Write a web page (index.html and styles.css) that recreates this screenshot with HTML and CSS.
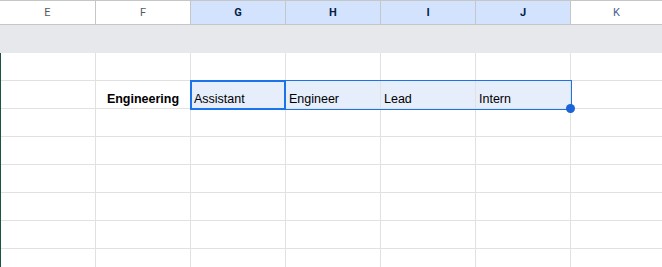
FILE: index.html
```html
<!DOCTYPE html>
<html lang="en">
<head>
    <meta charset="UTF-8">
    <meta name="viewport" content="width=device-width, initial-scale=1.0">
    <title>Sheet</title>
    <link rel="stylesheet" href="styles.css">
</head>
<body>

    <div class="sheet">
        <div class="col-heads">
            <div class="col-head">E</div>
            <div class="col-head">F</div>
            <div class="col-head active">G</div>
            <div class="col-head active">H</div>
            <div class="col-head active">I</div>
            <div class="col-head active">J</div>
            <div class="col-head">K</div>
        </div>

        <div class="frozen-band"></div>

        <div class="grid">
            <div class="row">
                <div class="cell"></div><div class="cell"></div><div class="cell"></div><div class="cell"></div>
                <div class="cell"></div><div class="cell"></div><div class="cell"></div>
            </div>
            <div class="row">
                <div class="cell"></div>
                <div class="cell bold center">Engineering</div>
                <div class="cell sel">Assistant</div>
                <div class="cell sel">Engineer</div>
                <div class="cell sel">Lead</div>
                <div class="cell sel">Intern</div>
                <div class="cell"></div>
            </div>
            <div class="row">
                <div class="cell"></div><div class="cell"></div><div class="cell"></div><div class="cell"></div>
                <div class="cell"></div><div class="cell"></div><div class="cell"></div>
            </div>
            <div class="row">
                <div class="cell"></div><div class="cell"></div><div class="cell"></div><div class="cell"></div>
                <div class="cell"></div><div class="cell"></div><div class="cell"></div>
            </div>
            <div class="row">
                <div class="cell"></div><div class="cell"></div><div class="cell"></div><div class="cell"></div>
                <div class="cell"></div><div class="cell"></div><div class="cell"></div>
            </div>
            <div class="row">
                <div class="cell"></div><div class="cell"></div><div class="cell"></div><div class="cell"></div>
                <div class="cell"></div><div class="cell"></div><div class="cell"></div>
            </div>
            <div class="row">
                <div class="cell"></div><div class="cell"></div><div class="cell"></div><div class="cell"></div>
                <div class="cell"></div><div class="cell"></div><div class="cell"></div>
            </div>
            <div class="row">
                <div class="cell"></div><div class="cell"></div><div class="cell"></div><div class="cell"></div>
                <div class="cell"></div><div class="cell"></div><div class="cell"></div>
            </div>

            <!-- selection overlay: range G2:J2, active cell G2 -->
            <div class="sel-range"></div>
            <div class="sel-active"></div>
            <div class="fill-handle"></div>
        </div>
    </div>

</body>
</html>
```

FILE: styles.css
```css
    body {
        margin: 0;
        background: #fff;
        overflow: hidden;
        font-family: Arial, "Liberation Sans", sans-serif;
    }
    .sheet {
        width: 662px;
        height: 267px;
        overflow: hidden;
    }

    /* column letters */
    .col-heads {
        display: grid;
        grid-template-columns: 96px repeat(5, 95px) 1fr;
        height: 23px;
        border-top: 1px solid #c4c7c5;
        border-bottom: 1px solid #c4c7c5;
    }
    .col-head {
        display: flex;
        align-items: center;
        justify-content: center;
        border-right: 1px solid #c4c7c5;
        font-family: Roboto, Arial, sans-serif;
        font-size: 11px;
        color: #575a5e;
        background: #fff;
    }
    .col-head:last-child {
        border-right: none;
        color: #44618e;
    }
    .col-head.active {
        background: #d3e3fd;
        color: #041e49;
        font-weight: 700;
    }

    .frozen-band {
        height: 28px;
        background: #e7e8ec;
    }

    /* cells */
    .grid {
        position: relative;
        border-left: 1px solid #1d5140;
    }
    .row {
        display: grid;
        grid-template-columns: repeat(6, 95px) 1fr;
        height: 27px;
        border-bottom: 1px solid #e1e1e1;
    }
    .cell {
        display: flex;
        align-items: flex-end;
        padding: 0 3px 1px;
        border-right: 1px solid #e1e1e1;
        font-size: 12.5px;
        line-height: 16px;
        color: #000;
        white-space: nowrap;
        overflow: hidden;
    }
    .cell:last-child {
        border-right: none;
    }
    .cell.bold {
        font-weight: 700;
    }
    .cell.center {
        justify-content: center;
    }
    .cell.sel {
        background: #e6eefc;
    }

    .sel-range {
        position: absolute;
        left: 189px;
        top: 27px;
        width: 380px;
        height: 28px;
        border: 1px solid #1a73e8;
        pointer-events: none;
    }
    .sel-active {
        position: absolute;
        left: 189px;
        top: 27px;
        width: 92px;
        height: 26px;
        border: 2px solid #1a73e8;
        pointer-events: none;
    }
    .fill-handle {
        position: absolute;
        left: 565px;
        top: 51px;
        width: 9px;
        height: 9px;
        border-radius: 50%;
        background: #1a63d8;
    }
```
